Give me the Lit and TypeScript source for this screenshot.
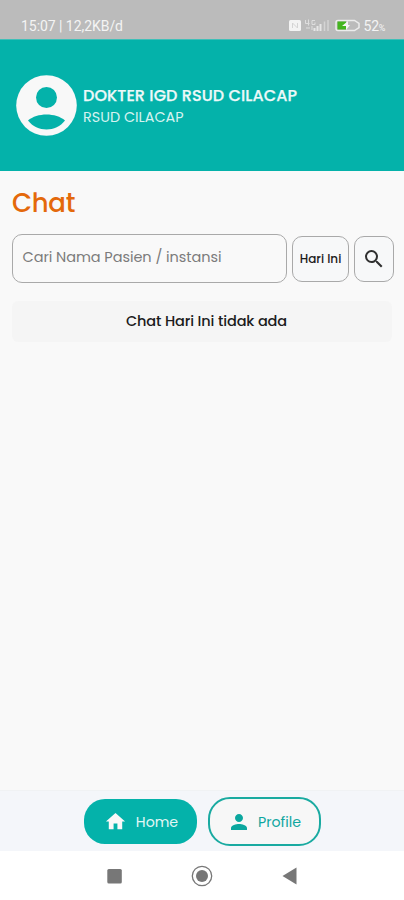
import { LitElement, html, css } from "lit";
import { customElement } from "lit/decorators.js";

@customElement("status-bar")
class StatusBar extends LitElement {
  static styles = css`
    :host { display: flex; box-sizing: border-box; height: 39px; padding: 12px 19px 0 21px; background: #bbb; color: #f4f4f4; font: 400 14px/28px Roboto, sans-serif; justify-content: space-between; }
    .clock { letter-spacing: -0.05px; white-space: nowrap; }
    .right { display: flex; }
    svg { display: block; }
    .battery { letter-spacing: -0.3px; margin-left: 2px; }
    small { font-size: 9px; }
  `;
  render() {
    return html`
      <span class="clock">15:07 | 12,2KB/d</span>
      <div class="right">
        <svg width="73" height="27" viewBox="0 0 73 27">
          <rect x="0" y="8" width="12" height="11" rx="1.5" fill="#f3f3f3" />
          <path d="M3.5 16v-5l5 5v-5" fill="none" stroke="#d4d4d4" />
          <path d="M16.5 8v3.5h4M19.5 7.5v6M26 8.5h-3v4h3v-2M17 16h4M23 14v4" fill="none" stroke="#dedede" />
          <path d="M25.5 19v-3M28.5 19v-5M31.5 19v-7" stroke="#e6e6e6" stroke-width="2" />
          <path d="M35.5 19V9.500M39 19V8" stroke="#d4d4d4" stroke-width="1.5" />
          <path d="M49 8.500h16.500l4.500 3v4l-4.500 3H49a2 2 0 0 1-2-2v-6a2 2 0 0 1 2-2Z" fill="none" stroke="#ececec" stroke-width="1.5" />
          <rect x="48.5" y="9.5" width="8.5" height="8" fill="#43b51f" />
          <path d="M59 9l-6 5h4v4l4-5h-2z" fill="#f5f5f5" />
        </svg>
        <span class="battery">52<small>%</small></span>
      </div>`;
  }
}

@customElement("profile-header")
class ProfileHeader extends LitElement {
  static styles = css`
    :host { display: flex; box-sizing: border-box; height: 132px; padding: 0 16px; align-items: center; gap: 6px; background: #04b2aa; color: #edf9f9; font-family: Poppins, Inter, sans-serif; border-top: 1px solid #3fbfb8; }
    svg { display: block; flex: none; }
    .names { display: flex; flex-direction: column; white-space: nowrap; }
    .name { font-size: 16px; font-weight: 500; line-height: 23px; letter-spacing: 0.09px; -webkit-text-stroke: 0.25px; }
    .place { font-size: 14.4px; line-height: 21px; color: #d5f2f0; }
  `;
  render() {
    return html`
      <svg width="61" height="61" viewBox="0 0 61 61">
        <circle cx="30.5" cy="30.5" r="30.3" fill="#f8f8f8" />
        <circle cx="30.5" cy="22.5" r="10.5" fill="#04b2aa" />
        <path d="M12 45.5C21 37.5 40 37.5 49 45.5C40 57.5 21 57.5 12 45.5Z" fill="#04b2aa" />
      </svg>
      <div class="names">
        <span class="name">DOKTER IGD RSUD CILACAP</span>
        <span class="place">RSUD CILACAP</span>
      </div>`;
  }
}

@customElement("chat-page")
class ChatPage extends LitElement {
  static styles = css`
    :host { display: block; flex: 1; padding: 12px 10px 0 12px; color: #1c1c1c; font-family: Poppins, Inter, sans-serif; }
    h1 { margin: 0; font-size: 26px; font-weight: 500; line-height: 40px; letter-spacing: -0.3px; color: #e4690b; }
    .search { display: flex; align-items: center; gap: 5px; margin-top: 11px; }
    .field, .button { box-sizing: border-box; border: 1px solid #a9a9a9; border-radius: 10px; white-space: nowrap; }
    .field { width: 275px; height: 49px; padding-left: 9.5px; font-size: 14.5px; line-height: 45px; letter-spacing: -0.06px; color: #7c7c7c; }
    .button { display: flex; align-items: center; justify-content: center; height: 46px; background: #f7f8f9; }
    .day { width: 57px; font-size: 12px; font-weight: 500; }
    .find { width: 40px; }
    .empty { margin: 18px 2px 0 0; box-sizing: border-box; height: 41px; padding-left: 9px; border-radius: 6px; background: #f5f5f5; text-align: center; font-size: 14.5px; font-weight: 500; line-height: 40px; letter-spacing: -0.12px; }
  `;
  render() {
    return html`
      <h1><span>Chat</span></h1>
      <div class="search">
        <div class="field"><span class="hint">Cari Nama Pasien / instansi</span></div>
        <div class="button day"><span>Hari Ini</span></div>
        <div class="button find">
          <svg width="24" height="24" viewBox="0 0 24 24"><path fill="#303030" d="M15.5 14h-.79l-.28-.27A6.471 6.471 0 0 0 16 9.5 6.5 6.5 0 1 0 9.5 16c1.61 0 3.09-.59 4.23-1.57l.27.28v.79l5 4.99L20.49 19l-4.99-5zm-6 0C7.01 14 5 11.99 5 9.5S7.01 5 9.5 5 14 7.01 14 9.5 11.99 14 9.5 14z" /></svg>
        </div>
      </div>
      <div class="empty"><span>Chat Hari Ini tidak ada</span></div>`;
  }
}

@customElement("tab-bar")
class TabBar extends LitElement {
  static styles = css`
    :host { display: flex; box-sizing: border-box; height: 61px; padding-top: 1px; align-items: center; justify-content: center; gap: 11px; background: #f4f6fa; border-top: 1px solid #f0f2f4; font: 400 14.2px/20px Poppins, Inter, sans-serif; }
    .tab { display: flex; box-sizing: border-box; width: 113px; align-items: center; justify-content: center; gap: 9px; color: #0fa69f; }
    .home { height: 45px; padding-left: 2px; border-radius: 21px; background: #04b2aa; color: #e2f7f5; }
    .profile { height: 49px; border: 2px solid #19aaa1; border-radius: 22px; background: #f7f7f7; gap: 7px; }
    svg { display: block; }
  `;
  render() {
    return html`
      <div class="tab home">
        <svg width="23" height="23" viewBox="0 0 24 24" fill="#f8f8f8"><path d="M10 20v-6h4v6h5v-8h3L12 3 2 12h3v8z" /></svg>
        <span>Home</span>
      </div>
      <div class="tab profile">
        <svg width="24" height="24" viewBox="0 0 24 24" fill="#0ba79f"><path d="M12 12c2.21 0 4-1.79 4-4s-1.79-4-4-4-4 1.79-4 4 1.79 4 4 4zm0 2c-2.67 0-8 1.34-8 4v2h16v-2c0-2.66-5.33-4-8-4z" /></svg>
        <span>Profile</span>
      </div>`;
  }
}

@customElement("system-nav")
class SystemNav extends LitElement {
  static styles = css`
    :host { display: flex; height: 49px; align-items: center; justify-content: center; gap: 64px; background: #fff; }
    svg { display: block; }
  `;
  render() {
    return html`
      <svg width="24" height="24"><rect x="5.3" y="5" width="14.5" height="14.5" rx="1.5" fill="#777" /></svg>
      <svg width="24" height="24"><circle cx="12" cy="12" r="9.7" fill="none" stroke="#777" stroke-width="1.3" /><circle cx="12" cy="12" r="6" fill="#777" /></svg>
      <svg width="24" height="24"><path d="M4.5 12L18.5 3.5V20.5Z" fill="#777" /></svg>`;
  }
}

@customElement("app-root")
class AppRoot extends LitElement {
  static styles = css`
    :host { display: flex; flex-direction: column; width: 404px; height: 900px; overflow: hidden; background: #f9f9f9; }
  `;
  render() {
    return html`<status-bar></status-bar><profile-header></profile-header><chat-page></chat-page><tab-bar></tab-bar><system-nav></system-nav>`;
  }
}
